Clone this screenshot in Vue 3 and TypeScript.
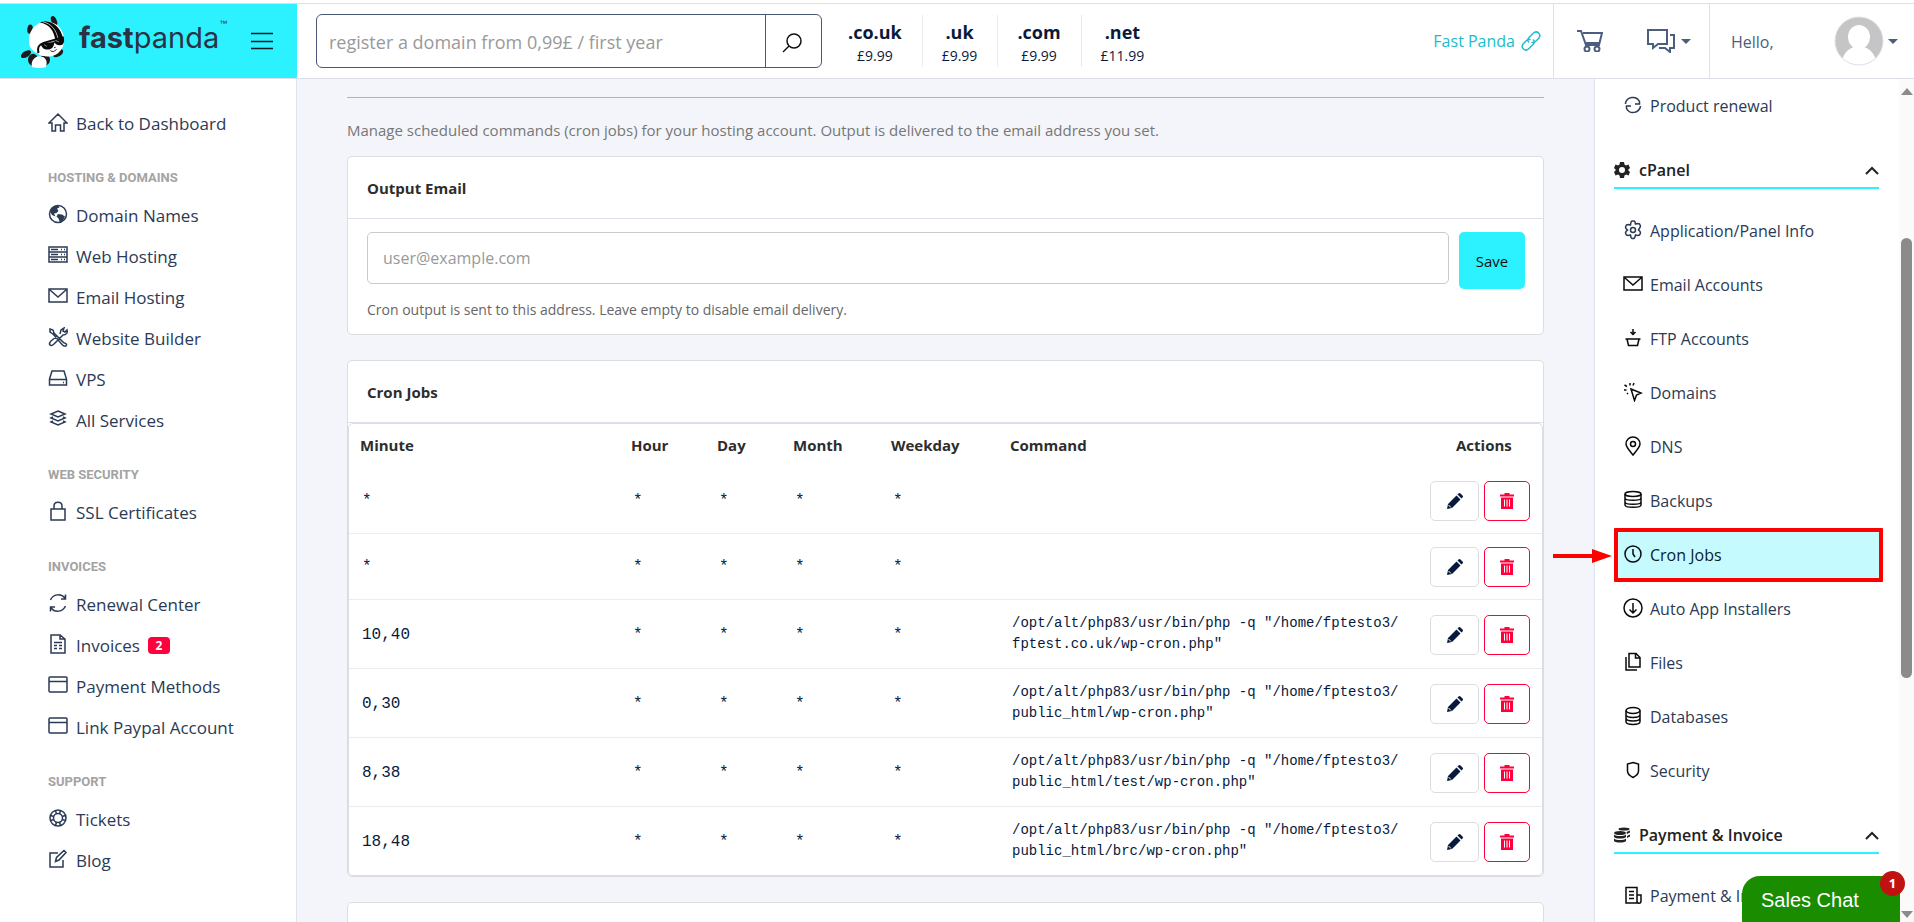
<script setup lang="ts">
import { ref } from 'vue'

interface NavItem { label: string; icon: string; badge?: number; active?: boolean; dark?: boolean }
interface NavGroup { title: string; items: NavItem[] }
interface CronJob { minute: string; hour: string; day: string; month: string; weekday: string; command: string[] }

const icons: Record<string, string> = {
  home: '<path d="M1 11 10 2l9 9h-3v8h-3.500v-6h-5v6H4v-8Z"/>',
  globe: '<circle cx="10" cy="10" r="8.500"/><path fill="currentColor" stroke="none" d="M2.500 6C4 3 7 1.500 10 1.500l1.500 2-2.500 1 1.500 2.500-2 2-2.500.5 1.500 3-3.500-1.500-2-3.500ZM10 10l4 .5 3 2-2 4-3 2-1.500-4-2-2Z"/>',
  server: '<path d="M1 2h18v15H1ZM1 7h18M1 12h18M3 4.500h7M3 9.500h7M3 14.500h7M13 4.500h1M16 4.500h1M13 9.500h1M16 9.500h1M13 14.500h1M16 14.500h1"/>',
  mail: '<path d="M1 3h18v13H1ZM2 4l8 7 8-7"/>',
  tools: '<path d="m2 2 3 1 1 3 9 9c2 2 4 1 3.500 3s-3 1-4 0L5 7 2 5ZM12 7l1-4 3-2-1 3 2 1 2-2c1 3-1 5-4 5l-9 9c-1 1-3 2-4 1s0-3 1-4l6-5"/>',
  drive: '<path d="M1.500 11 4 3h12l2.500 8v6h-17ZM1.500 11.500h17M15 14.500h1"/>',
  layers: '<path d="m10 2 7 3-7 3-7-3ZM5 8 3 9l7 3 7-3-2-1M5 12l-2 1 7 3 7-3-2-1"/>',
  lock: '<path d="M3 8h14v11H3ZM6 8V5c0-5 8-5 8 0v3"/>',
  refresh: '<path d="M2.500 7C5 1 13 0 17 5M17.500 1.500V6H13M17.500 13C15 19 7 20 3 15M2.500 18.500V14H7"/>',
  invoice: '<path d="M3 1h9l5 4v14H3ZM12 1v4h5M6 8.500h8M6 11.500h3M11 11.500h3M6 14.500h3M11 14.500h3"/>',
  card: '<rect x="1" y="2" width="18" height="15" rx="1"/><path d="M1 6.500h18"/>',
  ring: '<circle cx="10" cy="10" r="8"/><circle cx="10" cy="10" r="4.500"/><path d="M7.500 2.500 8.500 6M12.500 2.500l-1 3.500M7.500 17.500l1-3.500M12.500 17.500l-1-3.500M2.500 7.500l3.500 1M2.500 12.500l3.500-1M17.500 7.500l-3.500 1M17.500 12.500l-3.500-1"/>',
  edit: '<path d="M10 4H2v14h13v-7M7.500 12.500l1-4 7.500-7 2 2-7 7.500Z"/>',
  sync: '<path d="M2.500 8C4 2 13 0 16.500 6.500V9H12M17.500 11.500C16 18 7 20 3.500 13.500V11H8M2.500 8v1M17.500 11.500V11"/>',
  gear: '<path d="m8 2 1-1h2l1 1 .5 2 2-.5 2 .5 1 2-.5 1.500L15.500 10l1.500 1.500.5 1.500-1 2-2 .5-2-.5-.5 2-1 1.500H9L8 17.500l-.5-2.500-2 .5-2-.5-1-2 .5-1.500L4.500 10 3 8.500 2.500 7l1-2 2-.5 2 .5Z"/><circle cx="10" cy="10" r="2.500"/>',
  ftp: '<path d="M10 1v5M7.500 4 10 6.500 12.500 4M2.500 11h15M4 11l1.500 6.500h9L16 11"/>',
  cursor: '<path d="m8 7 10 4-4.500 2-2 5.500ZM7 1v2.500M11 1 10 3.500M1.500 3 4 4.500M1 8h2.500M4 12l1-1"/>',
  pin: '<path d="M10 19C6 14 3 11 3 8a7 7 0 0 1 14 0c0 3-3 6-7 11Z"/><circle cx="10" cy="8" r="2.500"/>',
  backup: '<ellipse cx="10" cy="4" rx="8" ry="2.500"/><path d="M2 4v11c0 3 16 3 16 0V4M2 8c0 3 16 3 16 0M2 12c0 3 16 3 16 0"/>',
  clock: '<circle cx="10" cy="10" r="8"/><path d="M10 5v5l2 3"/>',
  down: '<circle cx="10" cy="10" r="9"/><path d="M10 5v10M6.500 11.500 10 15l3.500-3.500"/>',
  files: '<path d="M6 1.500h7l4 4V15H6ZM12.500 1.500V6H17M3 5v13h11"/>',
  database: '<ellipse cx="10" cy="4.500" rx="7" ry="3"/><path d="M3 4.500v11c0 4 14 4 14 0v-11M3 8.500c0 4 14 4 14 0M3 12c0 4 14 4 14 0"/>',
  shield: '<path d="m10 2.500 5.500 1.500v7c0 3-2.500 5-5.500 6.500C7 16 4.500 14 4.500 11V4Z"/>',
  receipt: '<path d="M3 2.500h11V18H3ZM14 10h4v6c0 3-4 3-4 0M3 18h13M6 6.500h5M6 10h5M6 13.500h5"/>',
}

const groups: NavGroup[] = [
  { title: 'Hosting & Domains', items: [
    { label: 'Domain Names', icon: 'globe' },
    { label: 'Web Hosting', icon: 'server' },
    { label: 'Email Hosting', icon: 'mail' },
    { label: 'Website Builder', icon: 'tools' },
    { label: 'VPS', icon: 'drive' },
    { label: 'All Services', icon: 'layers' },
  ] },
  { title: 'Web Security', items: [{ label: 'SSL Certificates', icon: 'lock' }] },
  { title: 'Invoices', items: [
    { label: 'Renewal Center', icon: 'refresh' },
    { label: 'Invoices', icon: 'invoice', badge: 2 },
    { label: 'Payment Methods', icon: 'card' },
    { label: 'Link Paypal Account', icon: 'card' },
  ] },
  { title: 'Support', items: [
    { label: 'Tickets', icon: 'ring' },
    { label: 'Blog', icon: 'edit' },
  ] },
]

const panel: NavItem[] = [
  { label: 'Application/Panel Info', icon: 'gear' },
  { label: 'Email Accounts', icon: 'mail', dark: true },
  { label: 'FTP Accounts', icon: 'ftp', dark: true },
  { label: 'Domains', icon: 'cursor', dark: true },
  { label: 'DNS', icon: 'pin', dark: true },
  { label: 'Backups', icon: 'backup', dark: true },
  { label: 'Cron Jobs', icon: 'clock', dark: true, active: true },
  { label: 'Auto App Installers', icon: 'down', dark: true },
  { label: 'Files', icon: 'files', dark: true },
  { label: 'Databases', icon: 'database', dark: true },
  { label: 'Security', icon: 'shield', dark: true },
]

const tlds = [
  { name: '.co.uk', price: '£9.99' },
  { name: '.uk', price: '£9.99' },
  { name: '.com', price: '£9.99' },
  { name: '.net', price: '£11.99' },
]

const php = '/opt/alt/php83/usr/bin/php -q "/home/fptesto3/'
const every = { hour: '*', day: '*', month: '*', weekday: '*' }
const jobs: CronJob[] = [
  { minute: '*', ...every, command: [] },
  { minute: '*', ...every, command: [] },
  { minute: '10,40', ...every, command: [php, 'fptest.co.uk/wp-cron.php"'] },
  { minute: '0,30', ...every, command: [php, 'public_html/wp-cron.php"'] },
  { minute: '8,38', ...every, command: [php, 'public_html/test/wp-cron.php"'] },
  { minute: '18,48', ...every, command: [php, 'public_html/brc/wp-cron.php"'] },
]

const search = ref('')
const email = ref('')
</script>

<template>
  <div class="page">
    <header class="topbar">
      <div class="brand">
        <a href="#" class="logo" aria-label="fastpanda">
          <svg class="panda" viewBox="0 0 132 158" aria-hidden="true">
            <ellipse cx="27" cy="42" rx="8" ry="14" fill="#1d1b1c" transform="rotate(8 27 42)" />
            <ellipse cx="99" cy="17" rx="8" ry="15" fill="#1d1b1c" transform="rotate(-24 99 17)" />
            <ellipse cx="15" cy="117" rx="17" ry="9" fill="#1d1b1c" transform="rotate(-32 15 117)" />
            <ellipse cx="111" cy="114" rx="17" ry="10" fill="#1d1b1c" transform="rotate(-30 111 114)" />
            <ellipse cx="36" cy="134" rx="15" ry="18" fill="#1d1b1c" />
            <ellipse cx="72" cy="134" rx="15" ry="17" fill="#1d1b1c" />
            <path d="M34 156c-6-12 2-32 22-33 20 1 25 18 18 33-12 3-28 3-40 0Z" fill="#fff" />
            <path d="M24 79c-2-33 22-60 54-61 31 3 51 27 51 56 2 22-16 50-44 50-20 0-28-2-34-9C32 107 24 96 24 79Z" fill="#fff" />
            <path d="M57 22c32 7 41 27 46 52l23-5C121 42 100 19 74 18c-7 0-13 2-17 4Z" fill="#0a0a0a" />
            <path d="M66 20c26 6 39 24 45 50" fill="none" stroke="#fff" stroke-width="2" />
            <path d="M52 114c-3-17 0-25 16-31l60-17" fill="none" stroke="#0a0a0a" stroke-width="6" />
            <path d="m59 84 35-3 34-15c4 14-1 25-12 24-8 0-12-3-16-8-1 14-10 22-20 21-12 0-19-7-21-19Z" fill="#0a0a0a" />
            <path d="m69 88 9 6m27-17 9 3" stroke="#777" stroke-width="3" />
            <path d="M88 106c7 6 14 2 19-4M99 98l5-2" fill="none" stroke="#222" stroke-width="3" />
          </svg>
          <span class="wordmark"><b>fast</b>panda</span><sup>™</sup>
        </a>
        <button class="burger" aria-label="Toggle menu">
          <svg viewBox="0 0 22 18" aria-hidden="true"><path d="M0 1.500h22M0 9.500h22M0 16.500h22" /></svg>
        </button>
      </div>
      <form class="search" @submit.prevent>
        <input v-model="search" type="text" aria-label="Domain name" placeholder="register a domain from 0,99£ / first year" />
        <button type="submit" aria-label="Search">
          <svg viewBox="0 0 20 20" aria-hidden="true"><circle cx="12" cy="8" r="7" /><path d="m7 13-6 6" /></svg>
        </button>
      </form>
      <ul class="tlds">
        <li v-for="t in tlds" :key="t.name"><strong>{{ t.name }}</strong><span>{{ t.price }}</span></li>
      </ul>
      <a href="#" class="site">Fast Panda
        <svg viewBox="0 0 20 20" aria-hidden="true"><path d="M8 11.500c-2-2-1-4 0-5l4-4c4-4 9 1 5.500 5l-3 3c-1 1-3 1.500-4 .5M12 8.500c2 2 1 4 0 5l-4 4c-4 4-9-1-5.500-5l3-3c1-1 3-1.500 4-.5" /></svg>
      </a>
      <div class="tools">
        <a href="#" aria-label="Cart">
          <svg class="cart" viewBox="0 0 26 22" aria-hidden="true"><path d="M0 1h4l5 14h13l3-12H6M8 13h15" /><circle cx="10" cy="19" r="2.500" /><circle cx="20" cy="19" r="2.500" /></svg>
        </a>
        <button aria-label="Messages">
          <svg class="chat" viewBox="0 0 28 24" aria-hidden="true"><path d="M1 1h19v14h-9l-5 4v-4H1ZM23 6h4v13h-4v4l-5-4h-6" /></svg>
          <i class="caret"></i>
        </button>
      </div>
      <button class="user">
        <span>Hello,</span>
        <svg class="avatar" viewBox="0 0 50 50" aria-hidden="true">
          <defs><clipPath id="disc"><circle cx="25" cy="25" r="24" /></clipPath></defs>
          <circle cx="25" cy="25" r="24" fill="#c5c5c5" stroke="none" />
          <g clip-path="url(#disc)" fill="#fff" stroke="none"><ellipse cx="25" cy="21" rx="11" ry="12" /><path d="M20 27h10v4c6 2 12 7 13 19H7c1-12 7-17 13-19Z" /></g>
          <circle cx="25" cy="25" r="24" fill="none" stroke="#dfe1ee" />
        </svg>
        <i class="caret"></i>
      </button>
    </header>

    <div class="body">
      <nav class="left" aria-label="Main">
        <a href="#" class="link"><svg viewBox="0 0 20 20" aria-hidden="true" v-html="icons.home"></svg>Back to Dashboard</a>
        <section v-for="g in groups" :key="g.title">
          <h3>{{ g.title }}</h3>
          <a v-for="i in g.items" :key="i.label" href="#" class="link">
            <svg viewBox="0 0 20 20" aria-hidden="true" v-html="icons[i.icon]"></svg>{{ i.label }}
            <span v-if="i.badge" class="badge">{{ i.badge }}</span>
          </a>
        </section>
      </nav>

      <main class="main">
        <p class="intro">Manage scheduled commands (cron jobs) for your hosting account. Output is delivered to the email address you set.</p>

        <section class="card">
          <h2><label for="output-email">Output Email</label></h2>
          <form class="email" @submit.prevent>
            <div class="row">
              <input id="output-email" v-model="email" type="email" placeholder="user@example.com" />
              <button type="submit">Save</button>
            </div>
            <small>Cron output is sent to this address. Leave empty to disable email delivery.</small>
          </form>
        </section>

        <section class="card">
          <h2>Cron Jobs</h2>
          <div class="table-wrap">
            <table>
              <thead>
                <tr>
                  <th class="c-minute">Minute</th><th class="c-hour">Hour</th><th class="c-day">Day</th><th class="c-month">Month</th>
                  <th class="c-weekday">Weekday</th><th>Command</th><th class="c-actions">Actions</th>
                </tr>
              </thead>
              <tbody>
                <tr v-for="(j, n) in jobs" :key="n">
                  <td>{{ j.minute }}</td><td>{{ j.hour }}</td><td>{{ j.day }}</td><td>{{ j.month }}</td><td>{{ j.weekday }}</td>
                  <td class="cmd"><template v-for="(l, k) in j.command" :key="k"><br v-if="k" />{{ l }}</template></td>
                  <td class="acts">
                    <div>
                      <button class="act" aria-label="Edit">
                        <svg viewBox="0 0 16 16" aria-hidden="true"><path d="m0 16 1-5 8.500-8.500 4 4L5 15ZM10.500 1.500l1-1q1-1 2 0l2 2q1 1 0 2l-1 1Z" /><path d="m1.500 12 2.500 2.500" stroke="#fff" /></svg>
                      </button>
                      <button class="act del" aria-label="Delete">
                        <svg viewBox="0 0 16 16" aria-hidden="true"><path d="M1 1.500h4.500V0h5v1.500H15v2H1ZM2 4.500h12V16H2Z" /><path d="M5.500 6.500v7M8 6.500v7M10.500 6.500v7" stroke="#fff" /></svg>
                      </button>
                    </div>
                  </td>
                </tr>
              </tbody>
            </table>
          </div>
        </section>

        <section class="card"><div class="blank"></div></section>
      </main>

      <aside class="right">
        <div class="side">
          <a href="#" class="item"><svg viewBox="0 0 20 20" aria-hidden="true" v-html="icons.sync"></svg>Product renewal</a>
          <button class="group" aria-expanded="true">
            <svg class="lead" viewBox="0 0 16 16" aria-hidden="true"><path fill-rule="evenodd" d="M6 0h4l.5 2.500 1.500 1L14.500 2.500 16 6l-2 2 2 2-1.500 3.500-2.500-1-1.500 1L10 16H6l-.5-2.500-1.500-1-2.500 1L0 10l2-2-2-2 1.500-3.500 2.500 1 1.500-1ZM8 5a3 3 0 1 0 0 6 3 3 0 0 0 0-6Z" /></svg>
            <span>cPanel</span>
            <svg class="chev" viewBox="0 0 14 9" aria-hidden="true"><path d="m1 8 6-6 6 6" /></svg>
          </button>
          <a v-for="i in panel" :key="i.label" href="#" class="item" :class="{ dark: i.dark, active: i.active }">
            <svg viewBox="0 0 20 20" aria-hidden="true" v-html="icons[i.icon]"></svg>{{ i.label }}
            <svg v-if="i.active" class="arrow" viewBox="0 0 60 14" aria-hidden="true"><path d="M1 7h42" stroke="#f00" stroke-width="4" /><path d="m40 0 20 7-20 7Z" fill="#f00" stroke="none" /></svg>
          </a>
          <button class="group" aria-expanded="true">
            <svg class="lead" viewBox="0 0 16 16" aria-hidden="true"><ellipse cx="10" cy="2" rx="5.500" ry="1.500" /><ellipse cx="6" cy="6" rx="6" ry="2" /><path d="M0 7.500c2 2 10 2 12 0V10c-2 2-10 2-12 0ZM0 11.500c2 2 10 2 12 0V14c-2 2-10 2-12 0ZM12.500 5 16 3.500v2l-3 1.500ZM13 9l3-1.500v2L13 11Z" /></svg>
            <span>Payment &amp; Invoice</span>
            <svg class="chev" viewBox="0 0 14 9" aria-hidden="true"><path d="m1 8 6-6 6 6" /></svg>
          </button>
          <a href="#" class="item dark"><svg viewBox="0 0 20 20" aria-hidden="true" v-html="icons.receipt"></svg>Payment &amp; Invoice</a>
        </div>
        <div class="scroll" aria-hidden="true"><i class="up"></i><i class="thumb"></i><i class="dn"></i></div>
      </aside>
    </div>

    <button class="sales">Sales Chat<span>1</span></button>
  </div>
</template>

<style>
body { margin: 0; overflow: hidden; }
</style>

<style scoped>
* { box-sizing: border-box; }
.page {
  height: 100vh; display: flex; flex-direction: column; overflow: hidden; background: #fff; color: #2b3a55;
  font: 16px/24px "Open Sans", "Noto Sans", sans-serif;
}
button, input { font: inherit; color: inherit; }
button { background: none; border: 0; padding: 0; }
a { color: inherit; text-decoration: none; }
svg { fill: none; stroke: currentColor; flex: none; }
.caret { border: 5px solid transparent; border-top-color: #4c5d7d; border-bottom: 0; }

.topbar { flex: none; display: flex; align-items: center; margin-top: 3px; height: 76px; border: 1px solid #dcdfe8; border-width: 1px 0; }
.brand { align-self: stretch; width: 297px; flex: none; display: flex; align-items: center; justify-content: space-between; padding: 0 24px 0 21px; background: #2cf2ff; }
.logo { display: flex; align-items: center; color: #2b3245; }
.panda { width: 44px; height: 53px; stroke: none; margin-right: 14px; }
.wordmark { font: 29px/36px Inter, sans-serif; padding-bottom: 6px; }
sup { font: 8px/10px "Liberation Sans", sans-serif; align-self: flex-start; padding-top: 4px; }
.burger svg { width: 22px; height: 18px; stroke: #0d1b26; stroke-width: 1.500; display: block; }
.search { width: 506px; height: 54px; margin: 0 7px 0 19px; display: flex; border: 1px solid #4a5878; border-radius: 6px; }
.search input { flex: 1; min-width: 0; border: 0; outline: 0; padding: 2px 12px 0; background: none; font-size: 18px; }
.search button { width: 56px; padding-right: 4px; border-left: 1px solid #4a5878; color: #111; }
.search button svg { width: 20px; height: 20px; stroke-width: 1.500; vertical-align: middle; }
input::placeholder { color: #999; opacity: 1; }
.tlds { display: flex; margin: 0; padding: 0; list-style: none; text-align: center; color: #0b1a3b; }
.tlds li { padding: 4px 20px 2px 19px; height: 52px; display: flex; flex-direction: column; border-right: 1px solid #e8ebf0; }
.tlds li:last-child { border: 0; }
.tlds strong { font-size: 18px; line-height: 26px; }
.tlds span { font-size: 14px; line-height: 22px; }
.site { margin-left: auto; padding-right: 12px; display: flex; align-items: center; gap: 6px; color: #21bccb; }
.site svg { width: 20px; height: 20px; stroke-width: 1.500; }
.tools { align-self: stretch; width: 157px; display: flex; align-items: center; justify-content: space-between; padding: 0 18px 0 23px; border: 1px solid #dfe1ee; border-width: 0 1px; color: #4c5d7d; }
.tools svg { stroke-width: 2; display: block; }
.tools button { display: flex; align-items: center; gap: 6px; }
.cart { width: 26px; height: 22px; }
.chat { width: 28px; height: 24px; }
.user { width: 204px; display: flex; align-items: center; padding: 0 16px 0 21px; gap: 4px; color: #4c5d7d; }
.user span { margin-right: auto; padding-top: 2px; }
.avatar { width: 50px; height: 50px; }

.body { flex: 1; min-height: 0; display: flex; }
.left { width: 297px; flex: none; padding: 24px 20px 0 48px; border-right: 1px solid #dfe1ee; overflow: hidden; font-size: 17px; }
.link { display: flex; align-items: center; height: 41px; gap: 8px; }
.link svg { width: 20px; height: 20px; stroke-width: 1.500; margin-bottom: 3px; }
.left h3 { margin: 0; padding: 24px 0 8px; font: 700 13px/19px Roboto, sans-serif; color: #a3a3a3; text-transform: uppercase; }
.badge { background: #ff003c; color: #fff; border-radius: 4px; width: 22px; height: 17px; text-align: center; font: 700 12px/17px "Open Sans", sans-serif; }

.main { flex: 1; min-width: 0; overflow: hidden; background: #f4f5fa; padding: 18px 50px 0 50px; }
.intro { margin: 0 0 14px; padding-top: 20px; border-top: 1px solid #2ce9f5; color: #777; font-size: 15px; }
.card { background: #fff; border: 1px solid #dcdde0; border-radius: 5px; margin-bottom: 25px; }
.card h2 { margin: 0; padding: 19px 19px 18px; font-size: 15px; line-height: 24px; font-weight: 700; color: #2d2d2d; border-bottom: 1px solid #dfdfec; }
.email { padding: 13px 18px 13px 19px; color: #666; }
.row { display: flex; align-items: flex-start; gap: 10px; }
.row input { flex: 1; min-width: 0; height: 52px; padding: 0 15px; border: 1px solid #c8cacd; border-radius: 5px; outline: 0; }
.row button { width: 66px; height: 57px; border-radius: 5px; background: #2cf2ff; color: #111; font-size: 15px; }
.email small { display: block; font-size: 14px; line-height: 22px; margin-top: 10px; }
.table-wrap { border: 1px solid #dcdde0; border-radius: 5px; }
table { width: 100%; table-layout: fixed; border-collapse: separate; border-spacing: 0; color: #071a3d; }
th { text-align: left; padding: 10px 11px 12px; line-height: 22px; font-size: 15px; color: #2d2d2d; }
.c-minute { width: 271px; }
.c-hour { width: 86px; }
.c-day { width: 76px; }
.c-month { width: 98px; }
.c-weekday { width: 119px; }
.c-actions { width: 124px; padding-left: 38px; }
td { padding: 13px 13px 12px; border-bottom: 1px solid #ebecee; font: 16px/22px "Liberation Mono", monospace; }
td.cmd { padding: 13px; font-size: 14px; line-height: 21px; }
td.acts { padding-right: 12px; padding-left: 0; }
tr:last-child td { border: 0; }
.acts div { display: flex; gap: 5px; justify-content: flex-end; }
.act { width: 49px; height: 40px; border: 1px solid #dcdde0; border-radius: 5px; color: #071a3d; display: flex; align-items: center; justify-content: center; }
.act svg { width: 16px; height: 16px; fill: currentColor; stroke: none; }
.del { width: 46px; border-color: #ff003c; color: #ff003c; }
.blank { height: 120px; }

.right { width: 320px; flex: none; display: flex; justify-content: space-between; border-left: 1px solid #dfe1ee; }
.side { width: 265px; margin-left: 19px; }
.item { position: relative; height: 54px; display: flex; align-items: center; gap: 7px; padding-left: 9px; }
.item svg { width: 20px; height: 20px; stroke-width: 1.500; margin-bottom: 2px; }
.dark svg { stroke: #0a0a0a; }
.active { background: #c5fbff; color: #0d1b26; }
.active::after { content: ""; position: absolute; inset: 0 -4px 0 0; border: 4px solid #f00; border-radius: 1px; }
.item .arrow { position: absolute; left: -62px; top: 21px; width: 60px; height: 14px; margin: 0; }
.group { width: 100%; height: 36px; margin: 20px 0 15px; display: flex; align-items: center; gap: 9px; border-bottom: 2px solid #2cf2ff; color: #222; font-weight: 600; }
.group span { margin-right: auto; }
.lead { width: 16px; height: 16px; fill: currentColor; stroke: none; }
.chev { width: 14px; height: 9px; stroke-width: 2; }
.scroll { width: 15px; background: #fafafa; display: flex; flex-direction: column; align-items: center; padding: 9px 0 4px; }
.scroll i { border: 6px solid transparent; }
.scroll .up { border-bottom: 7px solid #8b8b8b; border-top: 0; }
.scroll .dn { border-top: 7px solid #8b8b8b; border-bottom: 0; margin-top: auto; }
.scroll .thumb { width: 11px; height: 53%; margin-top: 143px; border: 0; border-radius: 6px; background: #8b8b8b; }

.sales { position: absolute; right: 14px; bottom: 0; width: 158px; height: 46px; padding: 2px 0 0 19px; text-align: left; background: #1a8c00; color: #fff; border-radius: 18px 4px 0 0; font: 20px/24px "Liberation Sans", sans-serif; }
.sales span { position: absolute; right: -5px; top: -5px; width: 25px; height: 25px; border-radius: 50%; background: #c11212; text-align: center; font: 700 13px/25px "Open Sans", sans-serif; }
</style>
